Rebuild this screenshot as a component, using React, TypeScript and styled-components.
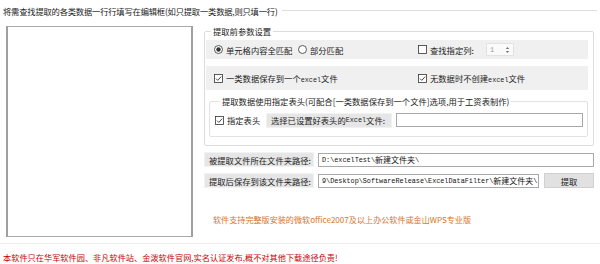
import styled, { createGlobalStyle } from 'styled-components';

const GlobalStyle = createGlobalStyle`
  html, body {
    margin: 0;
    padding: 0;
    background: #ffffff;
  }
  body {
    font-family: 'Noto Sans CJK SC', 'Noto Sans', sans-serif;
    font-size: 8.5px;
    color: #1a1a1a;
  }
`;

const cjk = `'Noto Sans CJK SC', 'Noto Sans', sans-serif`;
const mono = `'Liberation Mono', 'Noto Sans CJK SC', monospace`;

const Radio = ({ checked }: { checked?: boolean }) => (
  <svg width="9" height="9" viewBox="0 0 9 9">
    <circle cx="4.5" cy="4.5" r="4" fill="#fff" stroke="#333" strokeWidth="0.8" />
    {checked && <circle cx="4.5" cy="4.5" r="2.2" fill="#333" />}
  </svg>
);

const Check = ({ checked }: { checked?: boolean }) => (
  <svg width="9" height="9" viewBox="0 0 9 9">
    <rect x="0.5" y="0.5" width="8" height="8" fill="#fff" stroke="#333" strokeWidth="0.8" />
    {checked && <path d="M2 4.6 L3.8 6.4 L7.2 2.6" fill="none" stroke="#333" strokeWidth="0.9" />}
  </svg>
);

export default function App() {
  return (
    <Page>
      <GlobalStyle />
      <TitleRow>
        <TitleText>将需查找提取的各类数据一行行填写在编辑框(如只提取一类数据,则只填一行)</TitleText>
        <TitleLine />
      </TitleRow>

      <Main>
        <Editor />

        <Right>
          <Group>
            <Legend>提取前参数设置</Legend>
            <Band $height={19}>
              <Option $width={84}>
                <Radio checked />
                <span>单元格内容全匹配</span>
              </Option>
              <Option $width={120}>
                <Radio />
                <span>部分匹配</span>
              </Option>
              <Option $width={68}>
                <Check />
                <span>查找指定列:</span>
              </Option>
              <Spinner>
                <span>1</span>
                <svg width="5" height="8" viewBox="0 0 5 8">
                  <path d="M2.5 1 L4.3 3 H0.7 Z" fill="#777" />
                  <path d="M2.5 7 L4.3 5 H0.7 Z" fill="#777" />
                </svg>
              </Spinner>
            </Band>
            <Band $height={24} $top={7}>
              <Option $width={204}>
                <Check checked />
                <span>一类数据保存到一个<Ascii>excel</Ascii>文件</span>
              </Option>
              <Option>
                <Check checked />
                <span>无数据时不创建<Ascii>excel</Ascii>文件</span>
              </Option>
            </Band>

            <InnerGroup>
              <Legend>提取数据使用指定表头(可配合[一类数据保存到一个文件]选项,用于工资表制作)</Legend>
              <HeaderRow>
                <Option $width={49}>
                  <Check checked />
                  <span>指定表头</span>
                </Option>
                <FieldLabel $width={126}>选择已设置好表头的<Ascii>Excel</Ascii>文件:</FieldLabel>
                <TextBox $grow />
              </HeaderRow>
            </InnerGroup>
          </Group>

          <PathRow $top={6}>
            <FieldLabel $width={110}>被提取文件所在文件夹路径:</FieldLabel>
            <TextBox $grow>
              <Ascii>D:\excelTest\</Ascii>新建文件夹<Ascii>\</Ascii>
            </TextBox>
          </PathRow>
          <PathRow $top={6}>
            <FieldLabel $width={110}>提取后保存到该文件夹路径:</FieldLabel>
            <TextBox $grow>
              <Ascii>9\Desktop\SoftwareRelease\ExcelDataFilter\</Ascii>新建文件夹<Ascii>\</Ascii>
            </TextBox>
            <Button>提取</Button>
          </PathRow>

          <Notice>软件支持完整版安装的微软office2007及以上办公软件或金山WPS专业版</Notice>
        </Right>
      </Main>

      <Divider />
      <Footer>本软件只在华军软件园、非凡软件站、金泼软件官网,实名认证发布,概不对其他下载途径负责!</Footer>
    </Page>
  );
}

const Page = styled.div`
  width: 600px;
  height: 264px;
  overflow: hidden;
  display: flex;
  flex-direction: column;
`;

const TitleRow = styled.div`
  height: 22px;
  display: flex;
  align-items: center;
  padding: 0 3px 0 3px;
`;

const TitleText = styled.span`
  font-family: ${cjk};
  font-size: 8.3px;
  letter-spacing: -0.2px;
  white-space: nowrap;
  color: #222;
`;

const TitleLine = styled.div`
  flex: 1;
  margin-left: 4px;
  border-top: 1px solid #dedede;
  margin-top: -1px;
`;

const Main = styled.div`
  display: flex;
  align-items: flex-start;
`;

const Editor = styled.div`
  width: 183px;
  height: 209px;
  margin: 4px 0 0 6px;
  background: #fff;
  border: 1px solid #a8a8a8;
  border-left: 2px solid #a0a0a0;
  border-right: 2px solid #a0a0a0;
`;

const Right = styled.div`
  width: 390px;
  margin-left: 11px;
  padding-top: 4px;
  display: flex;
  flex-direction: column;
`;

const Group = styled.fieldset`
  margin: 0;
  padding: 4px 5px 8px 1px;
  border: 1px solid #dcdcdc;
  border-radius: 2px;
  min-width: 0;
`;

const Legend = styled.legend`
  font-family: ${cjk};
  font-size: 8.3px;
  padding: 0 2px;
  margin-left: 5px;
  line-height: 10px;
  color: #222;
  white-space: nowrap;
`;

const Band = styled.div<{ $height: number; $top?: number }>`
  height: ${({ $height }) => $height}px;
  margin-top: ${({ $top }) => $top ?? 0}px;
  background: #f0f0f0;
  display: flex;
  align-items: center;
  padding-left: 8px;
`;

const Option = styled.label<{ $width?: number }>`
  display: flex;
  align-items: center;
  gap: 3px;
  width: ${({ $width }) => ($width ? `${$width}px` : 'auto')};
  font-family: ${cjk};
  font-size: 8.3px;
  white-space: nowrap;
  color: #222;
`;

const Ascii = styled.span`
  font-family: ${mono};
  font-size: 6.8px;
`;

const Spinner = styled.div`
  width: 28px;
  height: 13px;
  border: 1px solid #e2e2e2;
  background: #fafafa;
  display: flex;
  align-items: center;
  justify-content: space-between;
  padding: 0 3px;
  box-sizing: border-box;
  font-family: ${mono};
  font-size: 7px;
  color: #999;
`;

const InnerGroup = styled.fieldset`
  margin: 6px 0 0 3px;
  padding: 5px 4px 8px 5px;
  border: 1px solid #e2e2e2;
  border-radius: 2px;
  min-width: 0;
`;

const HeaderRow = styled.div`
  display: flex;
  align-items: center;
  gap: 2px;
  height: 16px;
  padding-top: 1px;
`;

const FieldLabel = styled.div<{ $width: number }>`
  width: ${({ $width }) => $width}px;
  height: 15px;
  flex-shrink: 0;
  box-sizing: border-box;
  display: flex;
  align-items: center;
  padding-left: 4px;
  background: #e6e6e6;
  border: 1px solid #f2f2f2;
  font-family: ${cjk};
  font-size: 8.3px;
  white-space: nowrap;
  color: #222;
`;

const TextBox = styled.div<{ $grow?: boolean }>`
  flex: ${({ $grow }) => ($grow ? 1 : 'none')};
  height: 14px;
  box-sizing: border-box;
  margin-left: 2px;
  border: 1px solid #a9a9a9;
  background: #fff;
  display: flex;
  align-items: center;
  padding-left: 3px;
  font-family: ${cjk};
  font-size: 8px;
  white-space: nowrap;
  overflow: hidden;
  color: #111;
`;

const PathRow = styled.div<{ $top: number }>`
  display: flex;
  align-items: center;
  gap: 2px;
  margin-top: ${({ $top }) => $top}px;
`;

const Button = styled.button`
  width: 50px;
  height: 15px;
  margin-left: 3px;
  padding: 0;
  background: #e1e1e1;
  border: 1px solid #d0d0d0;
  font-family: ${cjk};
  font-size: 8.3px;
  color: #222;
`;

const Notice = styled.div`
  margin: 26px 0 0 9px;
  font-family: ${cjk};
  font-size: 8.1px;
  color: #d8742a;
  white-space: nowrap;
`;

const Divider = styled.div`
  margin-top: 6px;
  border-top: 1px solid #eeeeee;
`;

const Footer = styled.div`
  padding: 7px 0 0 3px;
  font-family: ${cjk};
  font-size: 8.2px;
  color: #c80000;
  white-space: nowrap;
`;
